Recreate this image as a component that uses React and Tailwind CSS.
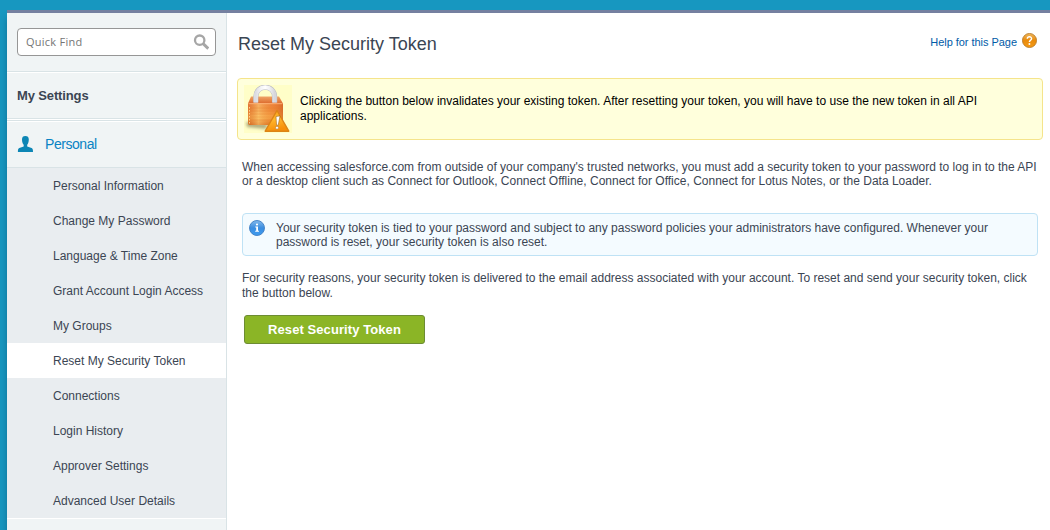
const items = [
  'Personal Information',
  'Change My Password',
  'Language & Time Zone',
  'Grant Account Login Access',
  'My Groups',
  'Reset My Security Token',
  'Connections',
  'Login History',
  'Approver Settings',
  'Advanced User Details',
];

function LockIcon() {
  return (
    <svg width="48" height="48" viewBox="0 0 48 48" className="block shrink-0">
      <defs>
        <linearGradient id="lockBody" x1="0" y1="0" x2="0" y2="1">
          <stop offset="0" stopColor="#ec8440" />
          <stop offset="0.3" stopColor="#f08c3c" />
          <stop offset="0.65" stopColor="#f9ac4c" />
          <stop offset="1" stopColor="#d96f22" />
        </linearGradient>
        <linearGradient id="lockSheen" x1="0" y1="0" x2="1" y2="0">
          <stop offset="0" stopColor="#c9501a" stopOpacity=".3" />
          <stop offset="0.3" stopColor="#ffe08a" stopOpacity=".45" />
          <stop offset="0.7" stopColor="#e87424" stopOpacity=".2" />
          <stop offset="1" stopColor="#bf4c14" stopOpacity=".5" />
        </linearGradient>
        <linearGradient id="lockTop" x1="0" y1="0" x2="0" y2="1">
          <stop offset="0" stopColor="#f0a568" />
          <stop offset="1" stopColor="#dd6a2c" />
        </linearGradient>
        <linearGradient id="shackle" x1="0" y1="0" x2="1" y2="0">
          <stop offset="0" stopColor="#dcdce2" />
          <stop offset="0.25" stopColor="#f2f2f5" />
          <stop offset="0.5" stopColor="#ffffff" />
          <stop offset="0.75" stopColor="#eeeef1" />
          <stop offset="1" stopColor="#d6d6dc" />
        </linearGradient>
        <linearGradient id="warn" x1="0" y1="0" x2="0.3" y2="1">
          <stop offset="0" stopColor="#f59a1c" />
          <stop offset="0.5" stopColor="#ffb62c" />
          <stop offset="1" stopColor="#f78f08" />
        </linearGradient>
        <filter id="soft" x="-20%" y="-50%" width="140%" height="200%">
          <feGaussianBlur stdDeviation="1.4" />
        </filter>
      </defs>
      <rect width="48" height="48" fill="#fffec8" />
      <path d="M2 37 L24 39 L22 44 L3 42Z" fill="#8f8a60" opacity=".7" filter="url(#soft)" />
      <path d="M7 11.500 H35 L39 18.500 H4Z" fill="url(#lockTop)" />
      <path d="M11.800 17.500 V12 C11.800 -1 30.600 -1 30.600 12 V17.500" fill="none" stroke="#bcbcc4" strokeWidth="5.200" />
      <path d="M11.800 17.500 V12 C11.800 -1 30.600 -1 30.600 12 V17.500" fill="none" stroke="url(#shackle)" strokeWidth="4.200" />
      <path d="M4.500 18 H38 Q39 18 39 19 V38 Q39 40 37 40 H6 Q4 40 4 38 V19 Q4 18 4.500 18Z" fill="url(#lockBody)" />
      <path d="M4.500 18 H38 Q39 18 39 19 V38 Q39 40 37 40 H6 Q4 40 4 38 V19 Q4 18 4.500 18Z" fill="url(#lockSheen)" />
      <path d="M5 23H38 M5 26H38 M5 29H38 M5 32H38 M5 35H38" stroke="#e27a2a" strokeWidth=".8" opacity=".4" />
      <path d="M5.500 22V39" stroke="#ffe2a4" strokeWidth="1" strokeDasharray="1.500 1.500" opacity=".8" />
      <path d="M4.500 18.700H38.500" stroke="#ffb57a" strokeWidth=".9" />
      <path d="M33 25.500 L44.800 46.200 H21.200Z" fill="url(#warn)" stroke="#dc8416" strokeWidth="1.400" strokeLinejoin="round" />
      <path d="M32 31.500 L36 30.900 L34.200 40.200 H32.600Z" fill="#fff" stroke="#8d5a14" strokeWidth=".5" />
      <circle cx="33" cy="42.700" r="1.500" fill="#fff" stroke="#8d5a14" strokeWidth=".4" />
    </svg>
  );
}

function InfoIcon() {
  return (
    <svg width="16" height="16" viewBox="0 0 16 16" className="block shrink-0">
      <defs>
        <linearGradient id="info" x1="0" y1="0" x2="0" y2="1">
          <stop offset="0" stopColor="#82b9ec" />
          <stop offset="0.5" stopColor="#3b8de0" />
          <stop offset="1" stopColor="#3d9bf0" />
        </linearGradient>
      </defs>
      <circle cx="8" cy="8" r="7.500" fill="url(#info)" stroke="#3f7fc4" strokeWidth=".9" />
      <circle cx="8" cy="4.500" r="1.100" fill="#fff" />
      <path d="M6.300 6.500H9V10.800H10V11.800H6.200V10.800H7.200V7.500H6.300Z" fill="#fff" />
    </svg>
  );
}

function HelpIcon() {
  return (
    <svg width="15" height="15" viewBox="0 0 15 15" className="block shrink-0">
      <defs>
        <linearGradient id="help" x1="0" y1="0" x2="0" y2="1">
          <stop offset="0" stopColor="#efb75c" />
          <stop offset="0.5" stopColor="#e98b0c" />
          <stop offset="1" stopColor="#f59a14" />
        </linearGradient>
      </defs>
      <circle cx="7.500" cy="7.500" r="7.050" fill="url(#help)" stroke="#b37420" strokeWidth=".8" />
      <path d="M5.300 5.800C5.300 3.100 9.600 3.100 9.600 5.700C9.600 7.200 7.400 7.100 7.400 9" fill="none" stroke="#fff" strokeWidth="1.400" />
      <circle cx="7.400" cy="11" r=".95" fill="#fff" />
    </svg>
  );
}

export default function App() {
  return (
    <div className="flex h-[530px] w-[1050px] flex-col overflow-hidden bg-[#1797c0] pl-[7px] pt-[10px] font-['Liberation_Sans',Arial,sans-serif] text-[12px] text-[#3b4553]">
      <div className="flex min-h-0 flex-1 border-t-[3px] border-[#7580a0] bg-white shadow-[0_8px_7px_rgba(0,40,70,0.35)]">
        <aside className="flex w-[220px] shrink-0 flex-col border-r border-[#d9e3e6] bg-[#f0f4f5]">
          <div className="h-[59px] shrink-0 border-b border-[#d9e3e6] px-[10px] pt-[15px]">
            <div className="flex h-[28px] w-[199px] items-center justify-between rounded-[4px] border border-[#969696] bg-white pl-2 pr-[6px]">
              <span className="font-['Open_Sans',sans-serif] text-[11px] tracking-[0.25px] text-[#757575]">Quick Find</span>
              <svg width="16" height="16" viewBox="0 0 16 16">
                <circle cx="6.700" cy="6.200" r="4.700" fill="none" stroke="#a6a6a6" strokeWidth="2.300" />
                <path d="M10.100 9.600L15.300 14.600" stroke="#a6a6a6" strokeWidth="2.900" />
              </svg>
            </div>
          </div>
          <div className="flex h-[47px] shrink-0 items-center border-b border-t border-b-[#d9e3e6] border-t-white pl-[10px] text-[13px] font-bold tracking-[-0.13px]">
            My Settings
          </div>
          <div className="h-[2px] shrink-0 border-b border-t border-b-[#d9e3e6] border-t-white" />
          <div className="flex h-[47px] shrink-0 items-center border-b border-t border-b-[#d9e3e6] border-t-white pl-[10px]">
            <svg width="17" height="17" viewBox="0 0 17 17" className="mr-[11px]">
              <path d="M8.300 0C10.600 0 11.800 1 11.800 3.500C11.800 6 11 8 10.200 8.800V10.600L14.600 12C15.700 12.400 16 13.300 16 16H.9C.9 13.300 1.200 12.400 2.300 12L6.700 10.600V8.800C5.800 8 5 6 5 3.500C5 1 6.200 0 8.300 0Z" fill="#0d86b5" />
            </svg>
            <span className="text-[14px] tracking-[-0.45px] text-[#0983c4]">Personal</span>
          </div>
          <nav className="bg-[#e9edf0]">
            {items.map((t) => (
              <div
                key={t}
                className={
                  t === 'Reset My Security Token'
                    ? 'flex h-[35px] items-center whitespace-nowrap bg-white pl-[46px]'
                    : 'flex h-[35px] items-center whitespace-nowrap pl-[46px]'
                }
              >
                {t}
              </div>
            ))}
          </nav>
          <div className="h-px shrink-0 bg-white" />
        </aside>

        <main className="min-w-0 flex-1 pl-[10px] pr-[7px]">
          <header className="flex h-[65px] items-start justify-between pl-px pr-[6px]">
            <h1 className="pt-5 text-[18px] leading-[22px]">Reset My Security Token</h1>
            <div className="flex items-start gap-[5px] pt-5 text-[11px] leading-[16px] tracking-[-0.04px] text-[#015ba7]">
              <span className="pt-px">Help for this Page</span>
              <HelpIcon />
            </div>
          </header>

          <section className="flex h-[62px] rounded-[4px] border border-[#f5e48b] bg-[#ffffdc] pl-[6px] pt-[6px] text-black">
            <LockIcon />
            <p className="whitespace-nowrap pl-2 pt-[9px] leading-[15px] tracking-[0.005px]">
              Clicking the button below invalidates your existing token. After resetting your token, you will have to use the new token in all API
              <br />
              applications.
            </p>
          </section>

          <p className="whitespace-nowrap pl-[5px] pt-[20px] leading-[14px]">
            When accessing salesforce.com from outside of your company's trusted networks, you must add a security token to your password to log in to the API
            <br />
            or a desktop client such as Connect for Outlook, Connect Offline, Connect for Office, Connect for Lotus Notes, or the Data Loader.
          </p>

          <section className="ml-[5px] mr-[5px] mt-[25px] flex h-[43px] rounded-[4px] border border-[#bfe2f5] bg-[#f4fbff] pl-[6px] pt-[6px]">
            <InfoIcon />
            <p className="whitespace-nowrap pl-[11px] pt-[1px] leading-[14px]">
              Your security token is tied to your password and subject to any password policies your administrators have configured. Whenever your
              <br />
              password is reset, your security token is also reset.
            </p>
          </section>

          <p className="whitespace-nowrap pl-[5px] pt-[15px] leading-[15px]">
            For security reasons, your security token is delivered to the email address associated with your account. To reset and send your security token, click
            <br />
            the button below.
          </p>

          <button className="ml-[7px] mt-[14px] flex h-[29px] w-[181px] items-center justify-center rounded-[3px] border border-[#6d8c33] bg-[#8bb526] text-[13px] font-bold tracking-[0.08px] text-white">
            Reset Security Token
          </button>
        </main>
      </div>
    </div>
  );
}
